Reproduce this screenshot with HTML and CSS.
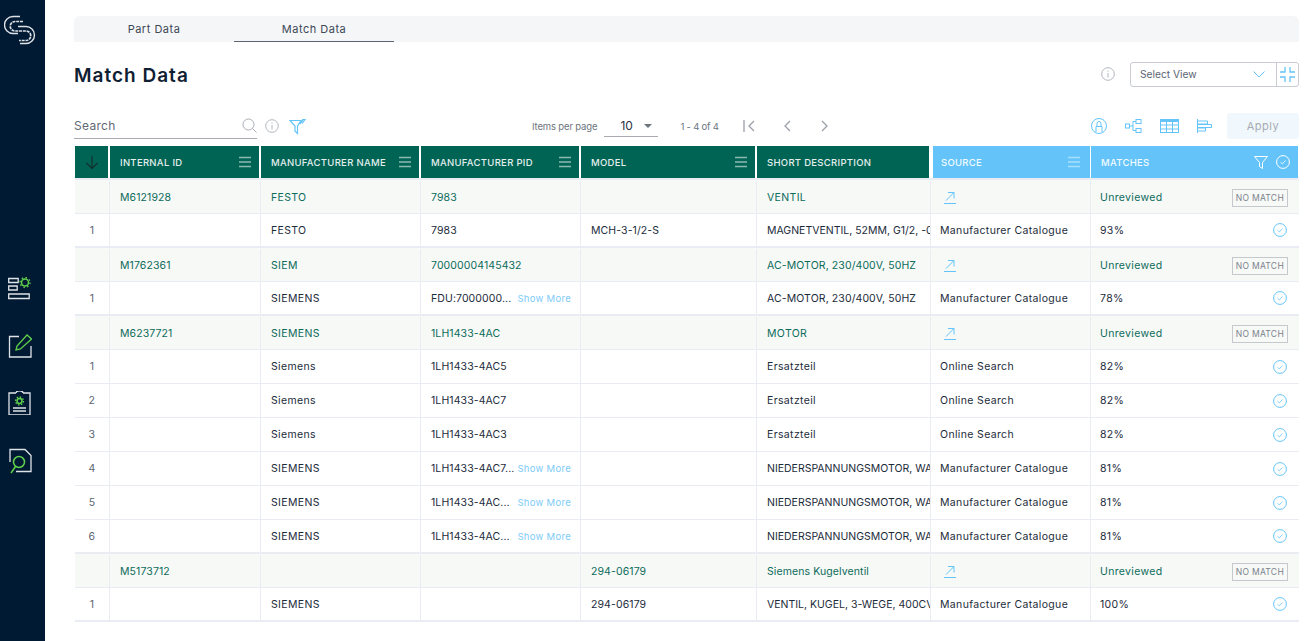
FILE: index.html
```html
<!DOCTYPE html>
<html lang="en">
<head>
<meta charset="utf-8">
<title>Match Data</title>
<link rel="stylesheet" href="styles.css">
</head>
<body>
<svg class="defs" width="0" height="0">
  <symbol id="menu" viewBox="0 0 12 12"><path d="M0 1.500h12M0 6h12M0 10.500h12" fill="none" stroke="currentColor" stroke-width="1.600"/></symbol>
  <symbol id="check" viewBox="0 0 14 14"><circle cx="7" cy="7" r="6.400" fill="none" stroke="currentColor"/><path d="M4.500 7.200l1.800 1.700 3.200-3.400" fill="none" stroke="currentColor" stroke-width=".8"/></symbol>
  <symbol id="open" viewBox="0 0 13 13"><path d="M1 12.500h12M3 9.500l8-8M5 1.500h6v6" fill="none" stroke="currentColor"/></symbol>
  <symbol id="info" viewBox="0 0 14 14"><circle cx="7" cy="7" r="6.300" fill="none" stroke="currentColor"/><path d="M7 6v4.500M7 3.500v1.200" fill="none" stroke="currentColor"/></symbol>
</svg>
<div class="app">
  <aside class="sidebar">
    <svg class="logo" width="32" height="32" viewBox="3 14 32 32" fill="none" stroke="#dde1e6" stroke-width="1.400">
      <path d="M19 16.500H12a8.500 8.500 0 0 0 0 17h5"/>
      <path d="M22 21.500H14a4.750 4.750 0 0 0 0 9.500h11a4.750 4.750 0 0 1 0 9.500h-7" stroke-width="1.700" stroke-dasharray="3 .8"/>
      <path d="M17 26.500h8a8.500 8.500 0 0 1 0 17h-6"/>
    </svg>
    <nav class="side-nav">
      <svg width="24" height="24" viewBox="0 0 24 24" fill="none" stroke="#dfe3e8" stroke-width="1.300"><path d="M.7 1.500h9.500v4H.7zM.7 9h8.500v4H.7zM.7 17h20.500v4.500H.7z"/><circle cx="17" cy="5.500" r="3.500" stroke="#5fd04b" stroke-width="1.500"/><circle cx="17" cy="5.500" r="5" stroke="#5fd04b" stroke-width="1.300" stroke-dasharray="1.500 2.400"/></svg>
      <svg width="24" height="24" viewBox="0 0 24 24" fill="none" stroke="#dfe3e8" stroke-width="1.300"><path d="M11 2.500H1.500V23h21.500V12"/><path d="M8 16l1-4L19 1l4.500 4-11 10z" stroke="#5fd04b"/></svg>
      <svg width="24" height="24" viewBox="0 0 24 24" fill="none" stroke="#dfe3e8" stroke-width="1.300"><path d="M8 2H1v22h21V2h-7M8 2c0-3 7-3 7 0"/><path d="M5 17h13M5 20h13"/><circle cx="11.500" cy="10" r="2.500" stroke="#5fd04b" stroke-width="1.500"/><circle cx="11.500" cy="10" r="4" stroke="#5fd04b" stroke-width="1.300" stroke-dasharray="1.500 1.600"/></svg>
      <svg width="24" height="26" viewBox="0 0 24 26" fill="none" stroke="#dfe3e8" stroke-width="1.300"><path d="M2 14V1.500h15l6 6V23.500H8"/><circle cx="11" cy="14" r="5.500" stroke="#5fd04b" stroke-width="1.500"/><path d="M7.500 18.500L3 25" stroke="#5fd04b" stroke-width="1.500"/></svg>
    </nav>
  </aside>
  <main class="main">
    <div class="tabs">
      <div class="tab">Part Data</div>
      <div class="tab tab-active">Match Data</div>
    </div>
    <div class="title-row">
      <h1 class="title">Match Data</h1>
      <div class="view-tools">
        <svg class="icon-info" width="14" height="14"><use href="#info"/></svg>
        <div class="select-view">
          <div class="select-main"><span>Select View</span>
            <svg width="12" height="7" viewBox="0 0 12 7" fill="none" stroke="#64c4f9"><path d="M.5.500L6 6 11.500.500"/></svg>
          </div>
          <div class="select-btn">
            <svg width="15" height="15" viewBox="0 0 15 15" fill="none" stroke="#64c4f9" stroke-width="1.300"><path d="M5 0v5H0M10 0v5h5M5 15v-5H0M10 15v-5h5"/></svg>
          </div>
        </div>
      </div>
    </div>
    <div class="toolbar">
      <div class="search-group">
        <div class="search"><span>Search</span>
          <svg width="15" height="15" viewBox="0 0 15 15" fill="none" stroke="#a9adb5"><circle cx="6.500" cy="6.500" r="5.500"/><path d="M10.500 10.500l4 4"/></svg>
        </div>
        <svg class="icon-info" width="14" height="14"><use href="#info"/></svg>
        <svg class="funnel" width="17" height="16" viewBox="0 0 17 16" fill="none" stroke="#64c4f9" stroke-width="1.200"><path d="M1 1.500h11L8.500 7v7.500L6 12V7zM13 .500l3 0-3 4M11 5l3-4"/></svg>
      </div>
      <div class="pager">
        <span class="items-label">Items per page</span>
        <div class="items-select"><span>10</span><i class="caret"></i></div>
        <span class="range">1 - 4 of 4</span>
        <div class="pager-btns">
          <svg width="12" height="12" viewBox="0 0 12 12" fill="none" stroke="#9a9fa8" stroke-width="1.300"><path d="M1 0v12M11 1L6 6l5 5"/></svg>
          <svg width="9" height="12" viewBox="0 0 9 12" fill="none" stroke="#9a9fa8" stroke-width="1.300"><path d="M7 1L2 6l5 5"/></svg>
          <svg width="9" height="12" viewBox="0 0 9 12" fill="none" stroke="#9a9fa8" stroke-width="1.300"><path d="M2 1l5 5-5 5"/></svg>
        </div>
      </div>
      <div class="actions">
        <svg width="16" height="16" viewBox="0 0 16 16" fill="none" stroke="#64c4f9"><circle cx="8" cy="8" r="7.500"/><path d="M5 14V8.500h6V14M6 8.500V5.500a2 2 0 0 1 4 0v3"/></svg>
        <svg width="17" height="14" viewBox="0 0 17 14" fill="none" stroke="#64c4f9"><rect x=".5" y="5" width="4" height="4"/><rect x="11" y=".5" width="5" height="4"/><rect x="11" y="9.500" width="5" height="4"/><path d="M4.500 7H8V2.500h3M8 7v4.500h3"/></svg>
        <svg width="19" height="14" viewBox="0 0 19 14" fill="none" stroke="#64c4f9"><rect x=".5" y=".5" width="18" height="13"/><path d="M.5 2h18" stroke-width="2"/><path d="M.5 6h18M.5 10h18M6.500 3v11M12.500 3v11"/></svg>
        <svg width="15" height="14" viewBox="0 0 15 14" fill="none" stroke="#64c4f9"><path d="M.5 0v14M.5 2h10v3H.5M.5 5.500h14v3H.5M.5 9h8v3H.5"/></svg>
        <button class="apply" type="button">Apply</button>
      </div>
    </div>

    <div class="grid">
      <div class="row head">
        <div class="hc sort"><svg width="12" height="13" viewBox="0 0 12 13" fill="none" stroke="#10302f" stroke-width="1.200"><path d="M6 0v12.500M.5 7L6 12.500 11.500 7"/></svg></div>
        <div class="hc"><span>INTERNAL ID</span><svg class="m" width="12" height="12"><use href="#menu"/></svg></div>
        <div class="hc"><span>MANUFACTURER NAME</span><svg class="m" width="12" height="12"><use href="#menu"/></svg></div>
        <div class="hc"><span>MANUFACTURER PID</span><svg class="m" width="12" height="12"><use href="#menu"/></svg></div>
        <div class="hc"><span>MODEL</span><svg class="m" width="12" height="12"><use href="#menu"/></svg></div>
        <div class="hc"><span>SHORT DESCRIPTION</span></div>
        <div class="hc blue src"><span>SOURCE</span><svg class="m" width="12" height="12"><use href="#menu"/></svg></div>
        <div class="hc blue"><span>MATCHES</span>
          <div class="hc-icons">
            <svg width="14" height="13" viewBox="0 0 14 13" fill="none" stroke="#fff"><path d="M.5.500h13L8.500 6.500v6l-3-2v-4z"/></svg>
            <svg width="14" height="14" color="#fff"><use href="#check"/></svg>
          </div>
        </div>
      </div>

      <div class="row group">
        <div class="c"></div><div class="c code">M6121928</div><div class="c">FESTO</div><div class="c code">7983</div><div class="c code"></div><div class="c">VENTIL</div>
        <div class="c s"><svg class="open" width="13" height="13"><use href="#open"/></svg></div>
        <div class="c m-col between"><span>Unreviewed</span><span class="nomatch">NO MATCH</span></div>
      </div>
      <div class="row last">
        <div class="c num">1</div><div class="c"></div><div class="c">FESTO</div><div class="c code">7983</div><div class="c code">MCH-3-1/2-S</div><div class="c clip tight">MAGNETVENTIL, 52MM, G1/2, -0</div><div class="c s">Manufacturer Catalogue</div>
        <div class="c m-col between"><span>93%</span><svg class="ok" width="14" height="14"><use href="#check"/></svg></div>
      </div>

      <div class="row group">
        <div class="c"></div><div class="c code">M1762361</div><div class="c">SIEM</div><div class="c code">70000004145432</div><div class="c code"></div><div class="c clip">AC-MOTOR, 230/400V, 50HZ</div>
        <div class="c s"><svg class="open" width="13" height="13"><use href="#open"/></svg></div>
        <div class="c m-col between"><span>Unreviewed</span><span class="nomatch">NO MATCH</span></div>
      </div>
      <div class="row last">
        <div class="c num">1</div><div class="c"></div><div class="c">SIEMENS</div><div class="c code between"><span class="trunc">FDU:7000000...</span><span class="more">Show More</span></div><div class="c code"></div><div class="c clip">AC-MOTOR, 230/400V, 50HZ</div><div class="c s">Manufacturer Catalogue</div>
        <div class="c m-col between"><span>78%</span><svg class="ok" width="14" height="14"><use href="#check"/></svg></div>
      </div>

      <div class="row group">
        <div class="c"></div><div class="c code">M6237721</div><div class="c">SIEMENS</div><div class="c code">1LH1433-4AC</div><div class="c code"></div><div class="c">MOTOR</div>
        <div class="c s"><svg class="open" width="13" height="13"><use href="#open"/></svg></div>
        <div class="c m-col between"><span>Unreviewed</span><span class="nomatch">NO MATCH</span></div>
      </div>
      <div class="row">
        <div class="c num">1</div><div class="c"></div><div class="c">Siemens</div><div class="c code">1LH1433-4AC5</div><div class="c code"></div><div class="c">Ersatzteil</div><div class="c s">Online Search</div>
        <div class="c m-col between"><span>82%</span><svg class="ok" width="14" height="14"><use href="#check"/></svg></div>
      </div>
      <div class="row">
        <div class="c num">2</div><div class="c"></div><div class="c">Siemens</div><div class="c code">1LH1433-4AC7</div><div class="c code"></div><div class="c">Ersatzteil</div><div class="c s">Online Search</div>
        <div class="c m-col between"><span>82%</span><svg class="ok" width="14" height="14"><use href="#check"/></svg></div>
      </div>
      <div class="row">
        <div class="c num">3</div><div class="c"></div><div class="c">Siemens</div><div class="c code">1LH1433-4AC3</div><div class="c code"></div><div class="c">Ersatzteil</div><div class="c s">Online Search</div>
        <div class="c m-col between"><span>82%</span><svg class="ok" width="14" height="14"><use href="#check"/></svg></div>
      </div>
      <div class="row">
        <div class="c num">4</div><div class="c"></div><div class="c">SIEMENS</div><div class="c code between"><span class="trunc">1LH1433-4AC7...</span><span class="more">Show More</span></div><div class="c code"></div><div class="c clip tight">NIEDERSPANNUNGSMOTOR, WA</div><div class="c s">Manufacturer Catalogue</div>
        <div class="c m-col between"><span>81%</span><svg class="ok" width="14" height="14"><use href="#check"/></svg></div>
      </div>
      <div class="row">
        <div class="c num">5</div><div class="c"></div><div class="c">SIEMENS</div><div class="c code between"><span class="trunc">1LH1433-4AC...</span><span class="more">Show More</span></div><div class="c code"></div><div class="c clip tight">NIEDERSPANNUNGSMOTOR, WA</div><div class="c s">Manufacturer Catalogue</div>
        <div class="c m-col between"><span>81%</span><svg class="ok" width="14" height="14"><use href="#check"/></svg></div>
      </div>
      <div class="row last">
        <div class="c num">6</div><div class="c"></div><div class="c">SIEMENS</div><div class="c code between"><span class="trunc">1LH1433-4AC...</span><span class="more">Show More</span></div><div class="c code"></div><div class="c clip tight">NIEDERSPANNUNGSMOTOR, WA</div><div class="c s">Manufacturer Catalogue</div>
        <div class="c m-col between"><span>81%</span><svg class="ok" width="14" height="14"><use href="#check"/></svg></div>
      </div>

      <div class="row group">
        <div class="c"></div><div class="c code">M5173712</div><div class="c"></div><div class="c code"></div><div class="c code">294-06179</div><div class="c clip">Siemens Kugelventil</div>
        <div class="c s"><svg class="open" width="13" height="13"><use href="#open"/></svg></div>
        <div class="c m-col between"><span>Unreviewed</span><span class="nomatch">NO MATCH</span></div>
      </div>
      <div class="row last">
        <div class="c num">1</div><div class="c"></div><div class="c">SIEMENS</div><div class="c code"></div><div class="c code">294-06179</div><div class="c clip tight">VENTIL, KUGEL, 3-WEGE, 400CV</div><div class="c s">Manufacturer Catalogue</div>
        <div class="c m-col between"><span>100%</span><svg class="ok" width="14" height="14"><use href="#check"/></svg></div>
      </div>
    </div>
  </main>
</div>
</body>
</html>
```
FILE: styles.css
```css
* { box-sizing: border-box; }
html, body { margin: 0; height: 100%; }
body { font-family: Inter, "Noto Sans", sans-serif; color: #1c2b3a; background: #fff; overflow: hidden; }
.defs { position: absolute; }

.app { display: flex; height: 641px; }
.sidebar { width: 45px; flex: none; background: #001a33; display: flex; flex-direction: column; align-items: center; }
.logo { margin-top: 14px; margin-left: -6px; }
.side-nav { display: flex; flex-direction: column; gap: 33px; margin-top: 231px; margin-left: -5px; }

.main { flex: 1; min-width: 0; padding: 16px 17px 0 29px; }

.tabs { display: flex; height: 26px; background: #f5f6f8; border-radius: 6px 6px 0 0; }
.tab { width: 160px; font-size: 11px; letter-spacing: .5px; color: #3c4856; display: flex; align-items: center; justify-content: center; }
.tab-active { border-bottom: 1px solid #5b6470; }

.title-row { display: flex; justify-content: space-between; align-items: center; height: 32px; margin-top: 17px; }
.title { margin: 0; font-size: 19px; font-weight: 600; letter-spacing: 1px; color: #0f2033; }
.view-tools { display: flex; align-items: center; gap: 15px; margin-top: -2px; }
.icon-info { color: #b3b7be; }
.select-view { display: flex; height: 25px; width: 169px; border: 1px solid #c9ccd2; border-radius: 3px; }
.select-main { flex: 1; display: flex; align-items: center; justify-content: space-between; padding: 0 11px 0 9px; font-size: 10.200px; color: #5a6472; border-right: 1px solid #c9ccd2; }
.select-btn { width: 21px; display: flex; align-items: center; justify-content: center; }

.toolbar { display: flex; align-items: center; height: 28px; margin-top: 21px; }
.search-group { display: flex; align-items: center; width: 458px; }
.search { width: 183px; height: 26px; display: flex; align-items: center; justify-content: space-between; border-bottom: 1px solid #a8abb2; font-size: 12px; color: #5f6875; letter-spacing: .3px; margin-right: 8px; }
.funnel { margin-left: 10px; margin-top: 1px; }
.pager { display: flex; align-items: center; font-size: 9.500px; color: #6c7480; }
.items-label { letter-spacing: -.15px; }
.items-select { display: flex; align-items: center; justify-content: space-between; width: 54px; height: 22px; margin: 0 22px 0 7px; padding: 0 6px 0 16px; border-bottom: 1px solid #a8abb2; font-size: 12px; color: #26323f; }
.caret { width: 0; height: 0; border-left: 4.500px solid transparent; border-right: 4.500px solid transparent; border-top: 4.500px solid #6c7480; }
.range { letter-spacing: -.2px; }
.pager-btns { display: flex; align-items: center; gap: 28px; margin-left: 24px; }
.actions { margin-left: auto; display: flex; align-items: center; gap: 18px; }
.apply { width: 72px; height: 26px; margin-left: -3px; border: 0; border-radius: 3px; background: #f1f8fd; color: #a6abb3; font: 11px Inter, sans-serif; letter-spacing: .5px; }

.grid { margin: 6px 0 0 1px; font-size: 10.500px; letter-spacing: .35px; }
.row { display: grid; grid-template-columns: 35px 151px 160px 160px 176px 174px 160px 208px; height: 34px; border-bottom: 1px solid #e9ecf2; }
.row.last { border-bottom-width: 2px; }
.head { height: 34px; border-bottom: 2px solid #e9ecf2; }
.hc { display: flex; align-items: center; justify-content: space-between; padding: 0 8px 0 10px; background: #006455; color: #e3efec; border-right: 2px solid #fff; font-size: 9.500px; font-weight: 500; letter-spacing: .3px; white-space: nowrap; }
.hc .m { color: #8cbab1; flex: none; }
.sort { justify-content: center; padding: 0; }
.blue { background: #64c4f9; color: #f2faff; border-right: 1px solid #fff; }
.blue .m { color: #a6dffc; }
.src { margin-left: 2px; padding-left: 8px; padding-right: 10px; }
.hc-icons { display: flex; align-items: center; gap: 8px; }

.c { display: flex; align-items: center; padding: 0 10px; min-width: 0; border-right: 1px solid #e9ecf2; white-space: nowrap; overflow: hidden; }
.c:last-child { border-right: 0; }
.code { letter-spacing: .1px; }
.clip { padding-right: 0; letter-spacing: .1px; }
.tight { letter-spacing: 0; }
.s { padding-left: 9px; padding-right: 0; }
.m-col { padding-left: 9px; }
.num { justify-content: center; color: #5a6472; }
.group { background: #f7f9f7; color: #0c6b5a; padding-top: 1px; }
.between { justify-content: space-between; }
.open { color: #64c4f9; margin-left: 3px; }
.nomatch { border: 1px solid #c5c8cd; padding: 0 3px; height: 18px; line-height: 16px; margin: 1px 1px 0 0; font-size: 8.500px; letter-spacing: .3px; color: #7b828c; }
.ok { color: #64c4f9; flex: none; margin-right: 2px; }
.more { color: #7ccbf8; font-size: 9.500px; letter-spacing: .3px; margin-right: -1px; }
.trunc { overflow: hidden; }
```
